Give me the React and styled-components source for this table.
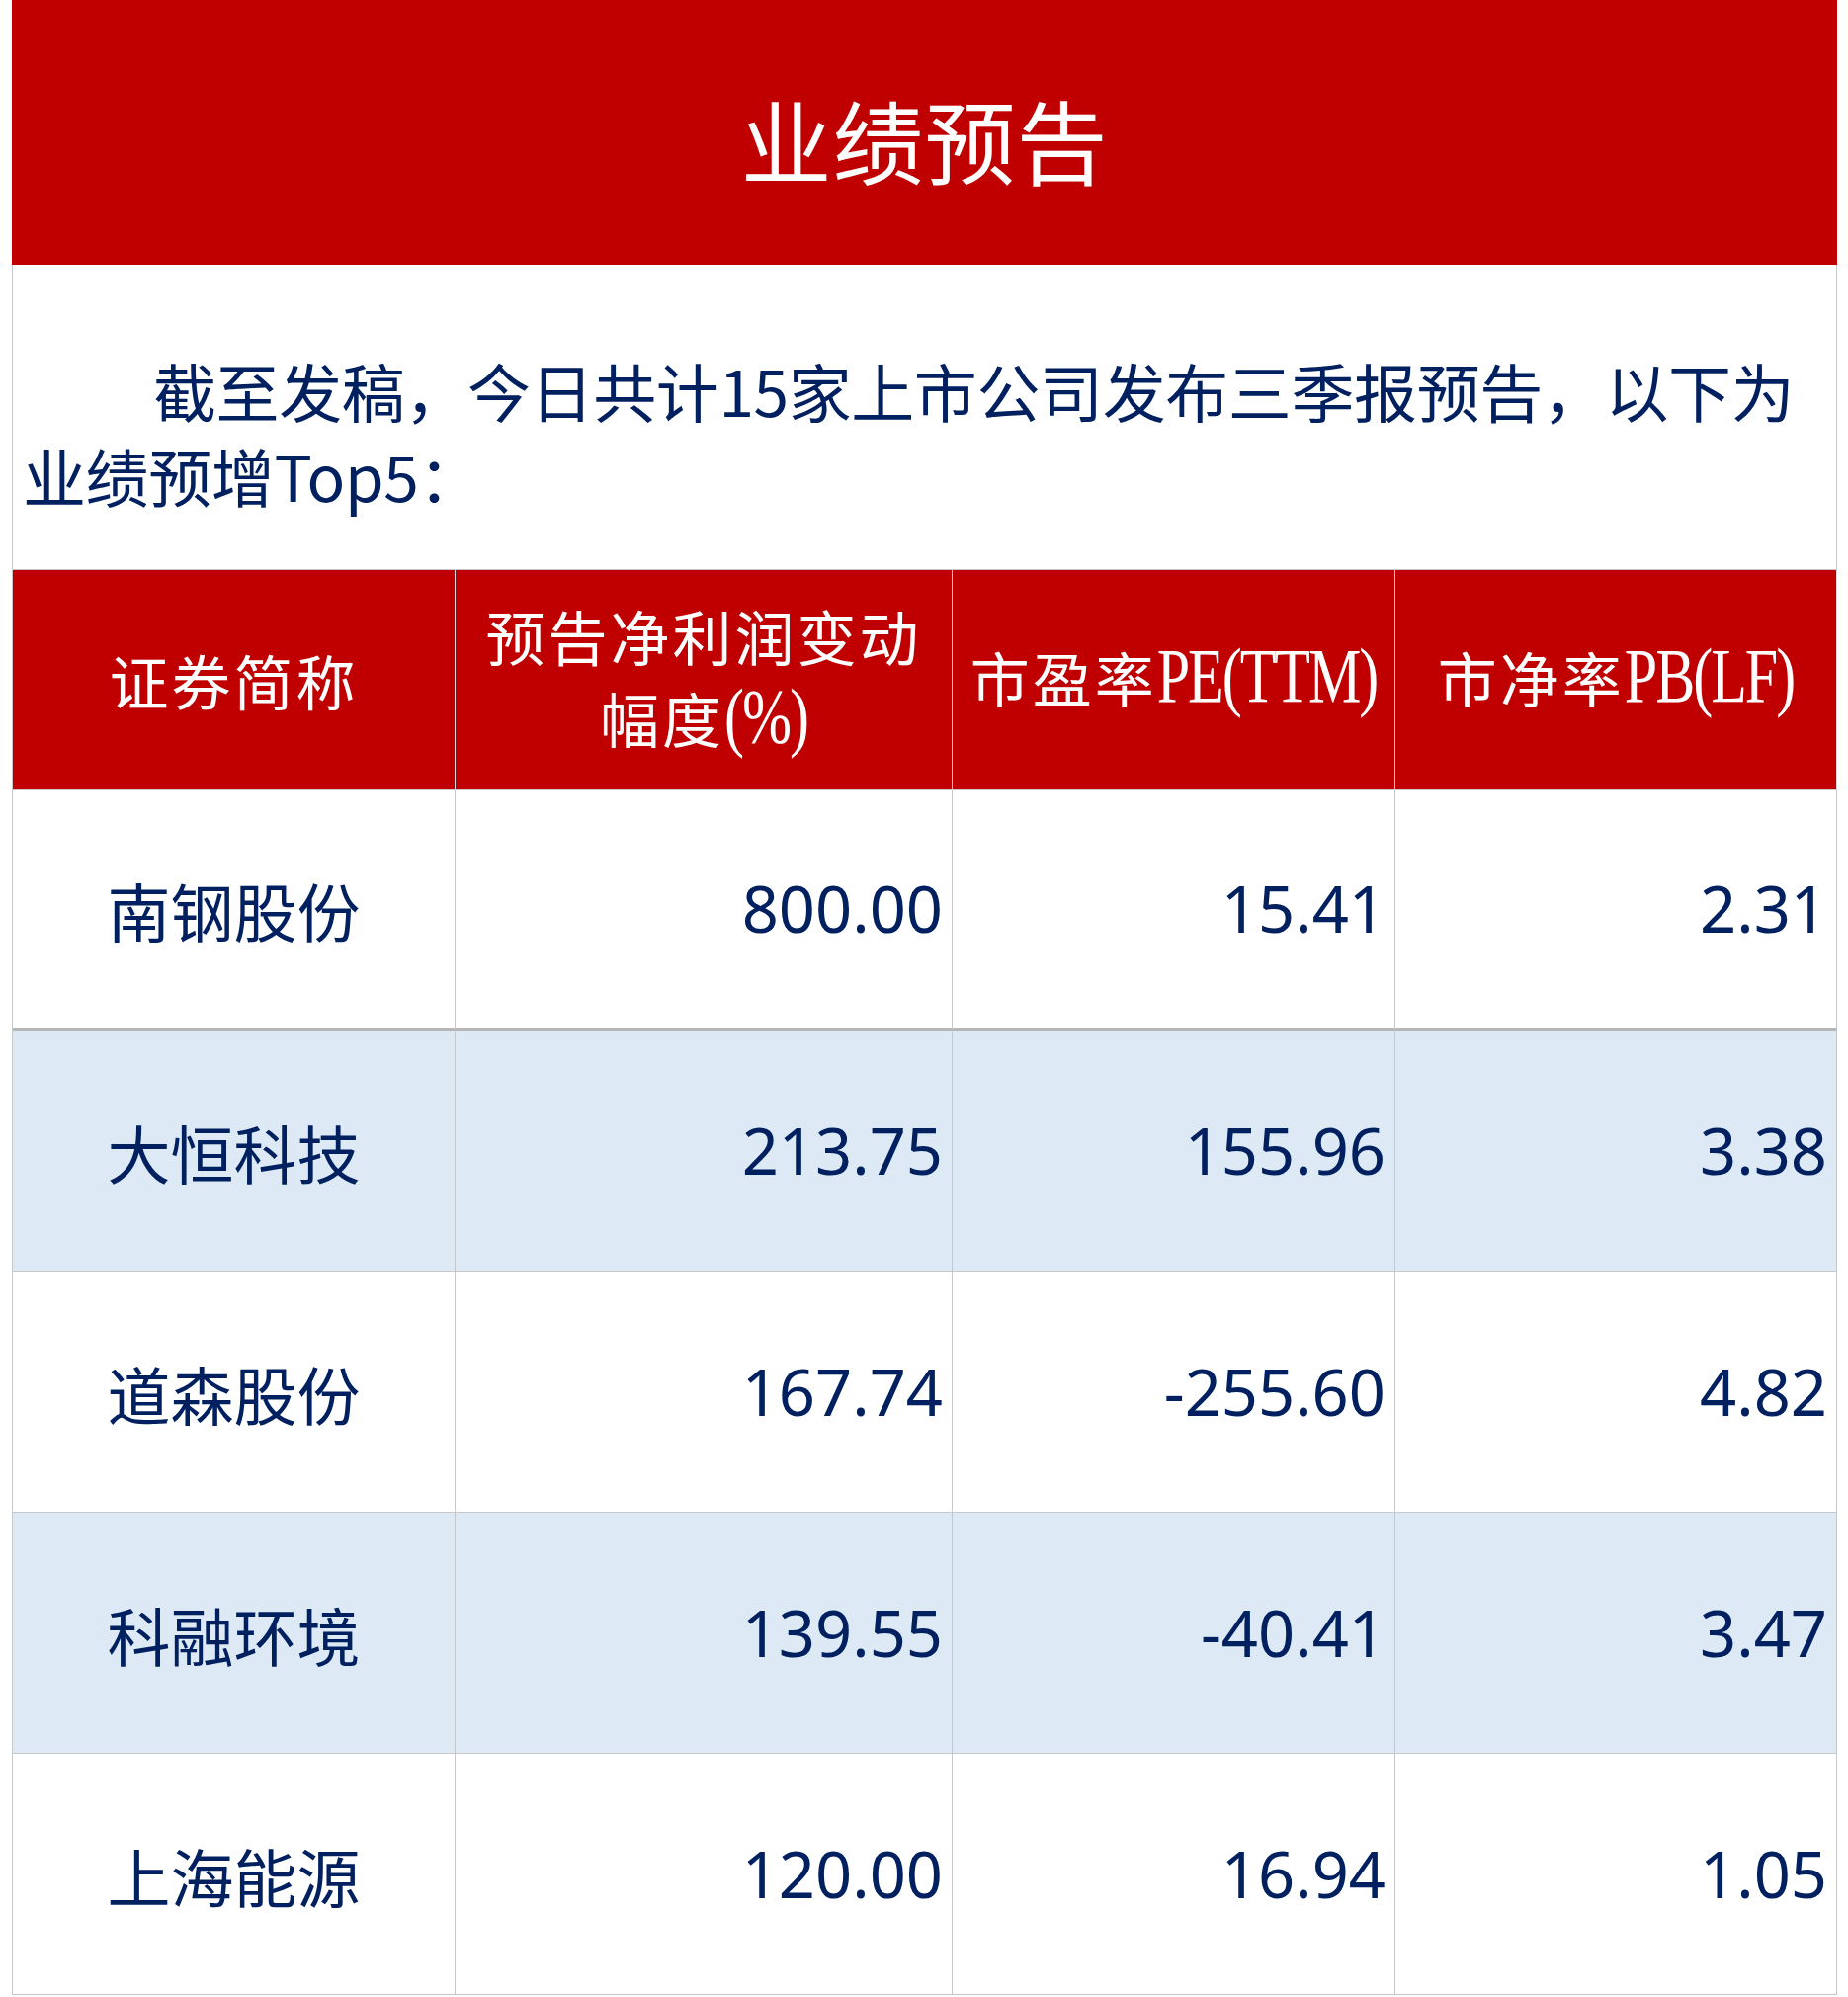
import React from "react";
import styled, { createGlobalStyle } from "styled-components";

const GlobalStyle = createGlobalStyle`
  body {
    margin: 0;
    background: #fff;
    font-family: "Noto Sans CJK SC", "Noto Sans", sans-serif;
  }
`;

const Page = styled.div`
  width: 1847px;
  margin-left: 12px;
`;

const Banner = styled.div`
  height: 268px;
  box-sizing: border-box;
  padding-top: 12px;
  background: #c00000;
  display: flex;
  align-items: center;
  justify-content: center;
`;

const Title = styled.h1`
  margin: 0;
  color: #fff;
  font-size: 92px;
  font-weight: 400;
  letter-spacing: 1px;
  line-height: 1;
`;

const Intro = styled.p`
  margin: 0;
  height: 308px;
  box-sizing: border-box;
  padding: 83px 8px 0 10px;
  border-left: 1px solid #c8c8c8;
  border-right: 1px solid #c8c8c8;
  color: #002060;
  font-size: 64px;
  line-height: 86px;
  letter-spacing: -0.4px;
  text-indent: 132px;
`;

const Table = styled.div`
  display: grid;
  grid-template-columns: 448px 503px 448px 447px;
  grid-template-rows: 222px repeat(5, 244px);
  border-left: 1px solid #c8c8c8;
  border-top: 1px solid #c8c8c8;
`;

const HeadCell = styled.div`
  box-sizing: border-box;
  background: #c00000;
  color: #fff;
  display: flex;
  align-items: center;
  justify-content: center;
  border-right: 1px solid #d6d6d6;
  border-bottom: 1px solid #c8c8c8;
`;

const HeadText = styled.div`
  text-align: center;
  font-size: 60px;
  line-height: 83px;
  letter-spacing: 3px;
`;

const Latin = styled.span`
  display: inline-block;
  font-family: "Liberation Serif", serif;
  letter-spacing: -2px;
  transform: scaleY(1.3);
  transform-origin: 50% 78%;
`;

const Cell = styled.div`
  box-sizing: border-box;
  display: flex;
  align-items: center;
  justify-content: ${(p) => (p.$num ? "flex-end" : "center")};
  padding-right: ${(p) => (p.$num ? "9px" : "0")};
  background: ${(p) => (p.$alt ? "#dde9f5" : "#fff")};
  border-right: 1px solid #c8c8c8;
  border-bottom: ${(p) => (p.$thick ? "3px solid #b7b7b7" : "1px solid #c8c8c8")};
  color: #002060;
  font-family: ${(p) =>
    p.$num ? '"Noto Sans", sans-serif' : '"Noto Sans CJK SC", sans-serif'};
  font-size: ${(p) => (p.$num ? "65px" : "64px")};
  line-height: 1;
`;

const rows = [
  ["南钢股份", "800.00", "15.41", "2.31"],
  ["大恒科技", "213.75", "155.96", "3.38"],
  ["道森股份", "167.74", "-255.60", "4.82"],
  ["科融环境", "139.55", "-40.41", "3.47"],
  ["上海能源", "120.00", "16.94", "1.05"],
];

export default function App() {
  return (
    <>
      <GlobalStyle />
      <Page>
        <Banner>
          <Title>业绩预告</Title>
        </Banner>
        <Intro>
          截至发稿，今日共计15家上市公司发布三季报预告，以下为业绩预增Top5：
        </Intro>
        <Table>
          <HeadCell>
            <HeadText>证券简称</HeadText>
          </HeadCell>
          <HeadCell>
            <HeadText>
              预告净利润变动
              <br />
              幅度<Latin>(%)</Latin>
            </HeadText>
          </HeadCell>
          <HeadCell>
            <HeadText>
              市盈率<Latin>PE(TTM)</Latin>
            </HeadText>
          </HeadCell>
          <HeadCell>
            <HeadText>
              市净率<Latin>PB(LF)</Latin>
            </HeadText>
          </HeadCell>
          {rows.map((r, i) => (
            <React.Fragment key={r[0]}>
              <Cell $alt={i % 2 === 1} $thick={i === 0}>{r[0]}</Cell>
              <Cell $num $alt={i % 2 === 1} $thick={i === 0}>{r[1]}</Cell>
              <Cell $num $alt={i % 2 === 1} $thick={i === 0}>{r[2]}</Cell>
              <Cell $num $alt={i % 2 === 1} $thick={i === 0}>{r[3]}</Cell>
            </React.Fragment>
          ))}
        </Table>
      </Page>
    </>
  );
}
